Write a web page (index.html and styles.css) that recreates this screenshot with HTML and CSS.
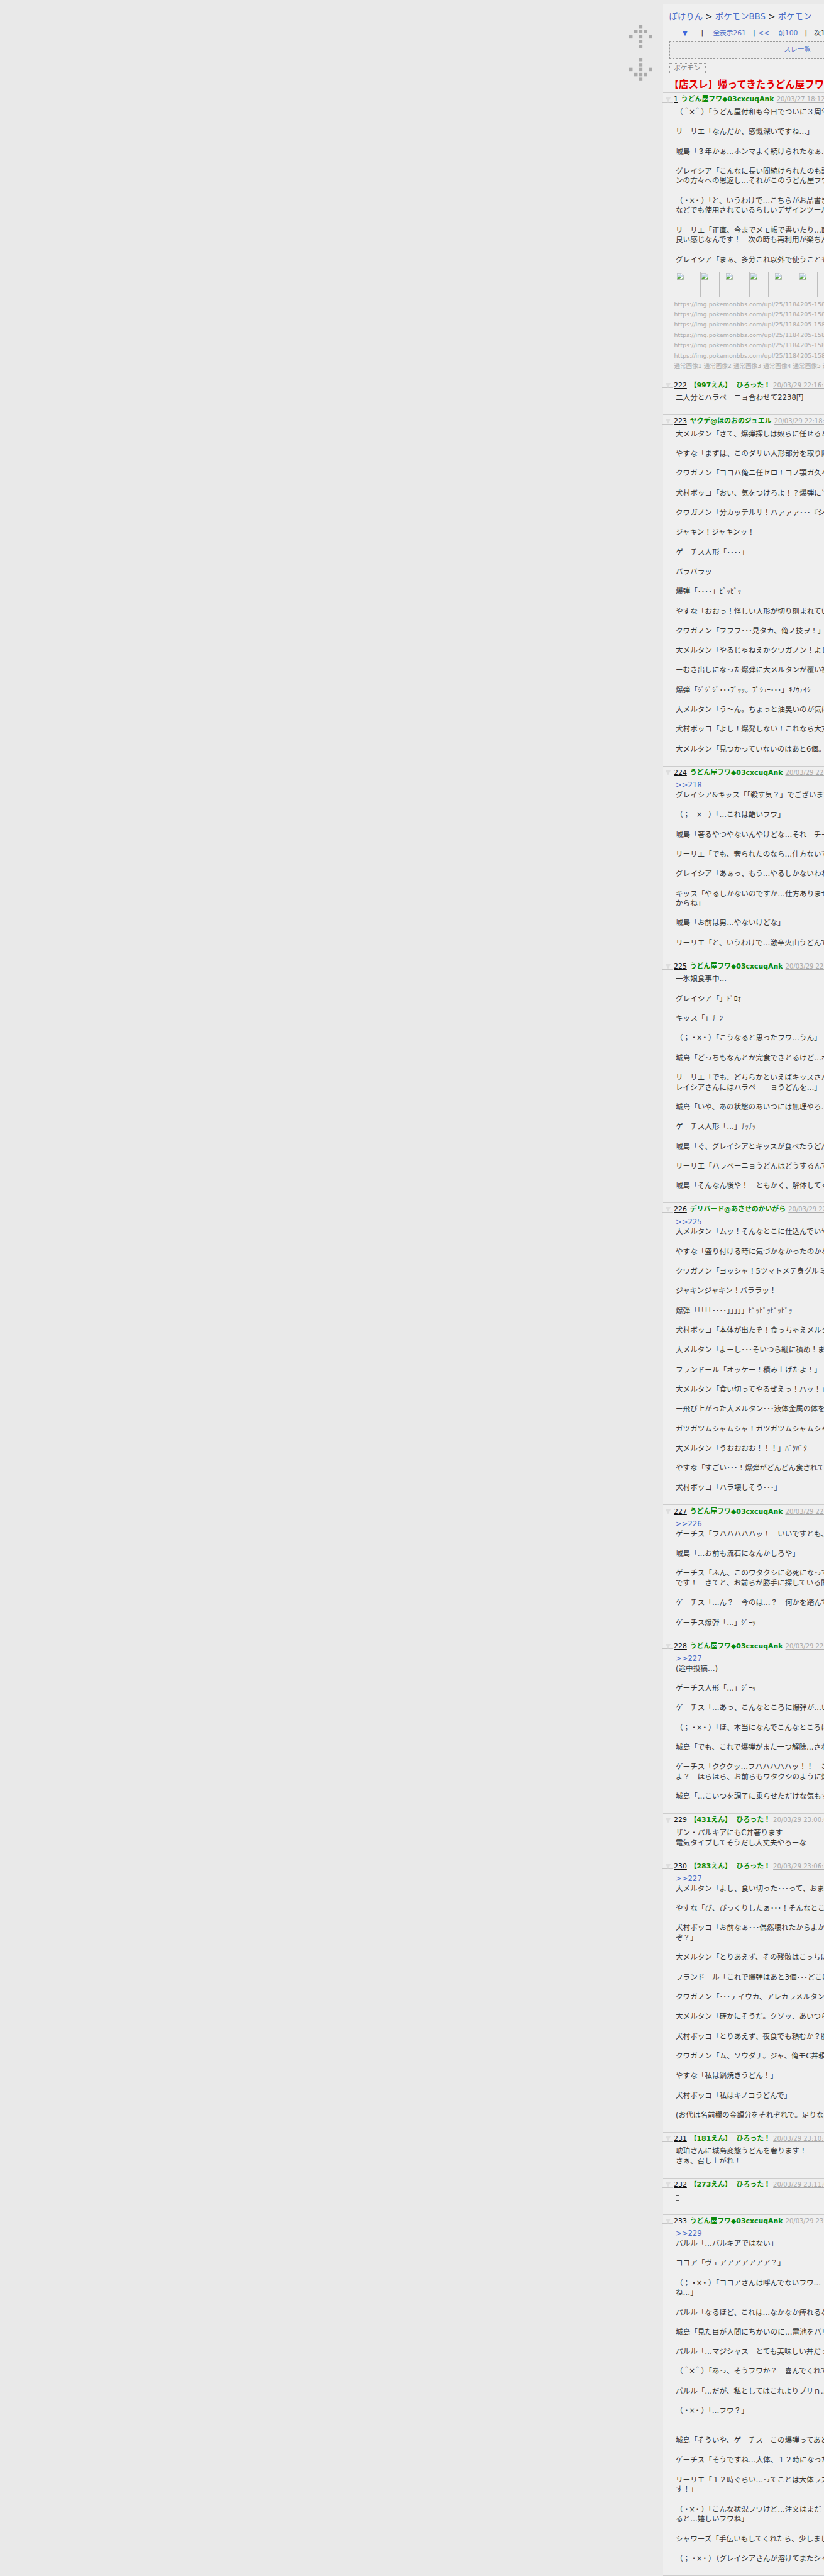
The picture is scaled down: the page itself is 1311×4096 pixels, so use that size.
FILE: index.html
```html
<!DOCTYPE html>
<html lang="ja">
<head>
<meta charset="utf-8">
<title>【店スレ】帰ってきたうどん屋フワ</title>
<link rel="stylesheet" href="styles.css">
</head>
<body>
<div class="page">
  <aside class="side">
    <svg class="arrow" viewBox="0 0 54 54" aria-label="上へ"><g fill="#aaaaaa"><rect x="23" y="0" width="8" height="8"/><rect x="11.7" y="11" width="8" height="8"/><rect x="23" y="11" width="8" height="8"/><rect x="34" y="11" width="8" height="8"/><rect x="0" y="23" width="8" height="8"/><rect x="23" y="23" width="8" height="8"/><rect x="46" y="23" width="8" height="8"/><rect x="23" y="34" width="8" height="8"/><rect x="23" y="46" width="8" height="8"/></g></svg>
    <svg class="arrow" viewBox="0 0 54 54" aria-label="下へ"><g fill="#aaaaaa"><rect x="23" y="0" width="8" height="8"/><rect x="23" y="12" width="8" height="8"/><rect x="0" y="23" width="8" height="8"/><rect x="23" y="23" width="8" height="8"/><rect x="46" y="23" width="8" height="8"/><rect x="11.7" y="35" width="8" height="8"/><rect x="23" y="35" width="8" height="8"/><rect x="34" y="35" width="8" height="8"/><rect x="23" y="46" width="8" height="8"/></g></svg>
  </aside>
  <main class="main">
    <div class="top">
      <div class="crumb"><a class="lnk">ぽけりん</a> &gt; <a class="lnk">ポケモンBBS</a> &gt; <a class="lnk">ポケモン</a></div>
      <div class="subnav">
        <a class="lnk sn-down">▼</a><span class="sn-bar1">|</span><a class="lnk sn-all">全表示261</a><span class="sn-bar2">|</span><a class="lnk sn-first">&lt;&lt;</a><a class="lnk sn-prev">前100</a><span class="sn-bar2">|</span><span class="sn-next">次100</span>
      </div>
      <div class="listbox"><a class="lnk">スレ一覧</a></div>
      <div class="tag">ポケモン</div>
      <h1 class="title">【店スレ】帰ってきたうどん屋フワ最終章</h1>
    </div>

    <article class="post">
      <span class="mark"><span class="tri"></span></span>
      <div class="head"><span class="num">1</span><span class="name">うどん屋フワ◆03cxcuqAnk</span><span class="date">20/03/27 18:12:34</span></div>
      <div class="text text-attach">（＾<i class="x">×</i>＾）「うどん屋付和も今日でついに３周年<br><br>リーリエ「なんだか、感慨深いですね…」<br><br>城島「３年かぁ…ホンマよく続けられたなぁ…<br><br>グレイシア「こんなに長い間続けられたのも読者<br>ンの方々への恩返し…それがこのうどん屋フワ<br><br>（・<i class="x">×</i>・）「と、いうわけで…こちらがお品書き<br>などでも使用されているらしいデザインツール<br><br>リーリエ「正直、今までメモ帳で書いたり…面<br>良い感じなんです！　次の時も再利用が楽ちん<br><br>グレイシア「まぁ、多分これ以外で使うことも</div>
      <div class="attach">
        <div class="thumbs">
          <span class="thumb"><svg class="broken" viewBox="0 0 16 16"><path d="M.5.5H10L15.5 6V15.5H.5Z" fill="#fff" stroke="#999"/><path d="M1 1H10V6H15V9L8 10 1 13Z" fill="#c6d8ea"/><path d="M2 3.5H7V5.5H2Z" fill="#fff"/><path d="M1 15V12L6 8 10 11 3 15Z" fill="#5aa83c"/><path d="M12 13L15 10V15H10Z" fill="#5aa83c"/></svg></span>
          <span class="thumb"><svg class="broken" viewBox="0 0 16 16"><path d="M.5.5H10L15.5 6V15.5H.5Z" fill="#fff" stroke="#999"/><path d="M1 1H10V6H15V9L8 10 1 13Z" fill="#c6d8ea"/><path d="M2 3.5H7V5.5H2Z" fill="#fff"/><path d="M1 15V12L6 8 10 11 3 15Z" fill="#5aa83c"/><path d="M12 13L15 10V15H10Z" fill="#5aa83c"/></svg></span>
          <span class="thumb"><svg class="broken" viewBox="0 0 16 16"><path d="M.5.5H10L15.5 6V15.5H.5Z" fill="#fff" stroke="#999"/><path d="M1 1H10V6H15V9L8 10 1 13Z" fill="#c6d8ea"/><path d="M2 3.5H7V5.5H2Z" fill="#fff"/><path d="M1 15V12L6 8 10 11 3 15Z" fill="#5aa83c"/><path d="M12 13L15 10V15H10Z" fill="#5aa83c"/></svg></span>
          <span class="thumb"><svg class="broken" viewBox="0 0 16 16"><path d="M.5.5H10L15.5 6V15.5H.5Z" fill="#fff" stroke="#999"/><path d="M1 1H10V6H15V9L8 10 1 13Z" fill="#c6d8ea"/><path d="M2 3.5H7V5.5H2Z" fill="#fff"/><path d="M1 15V12L6 8 10 11 3 15Z" fill="#5aa83c"/><path d="M12 13L15 10V15H10Z" fill="#5aa83c"/></svg></span>
          <span class="thumb"><svg class="broken" viewBox="0 0 16 16"><path d="M.5.5H10L15.5 6V15.5H.5Z" fill="#fff" stroke="#999"/><path d="M1 1H10V6H15V9L8 10 1 13Z" fill="#c6d8ea"/><path d="M2 3.5H7V5.5H2Z" fill="#fff"/><path d="M1 15V12L6 8 10 11 3 15Z" fill="#5aa83c"/><path d="M12 13L15 10V15H10Z" fill="#5aa83c"/></svg></span>
          <span class="thumb"><svg class="broken" viewBox="0 0 16 16"><path d="M.5.5H10L15.5 6V15.5H.5Z" fill="#fff" stroke="#999"/><path d="M1 1H10V6H15V9L8 10 1 13Z" fill="#c6d8ea"/><path d="M2 3.5H7V5.5H2Z" fill="#fff"/><path d="M1 15V12L6 8 10 11 3 15Z" fill="#5aa83c"/><path d="M12 13L15 10V15H10Z" fill="#5aa83c"/></svg></span>
        </div>
        <div class="url">https://img.pokemonbbs.com/upl/25/1184205-1585</div>
        <div class="url">https://img.pokemonbbs.com/upl/25/1184205-1585</div>
        <div class="url">https://img.pokemonbbs.com/upl/25/1184205-1585</div>
        <div class="url">https://img.pokemonbbs.com/upl/25/1184205-1585</div>
        <div class="url">https://img.pokemonbbs.com/upl/25/1184205-1585</div>
        <div class="url">https://img.pokemonbbs.com/upl/25/1184205-1585</div>
        <div class="url">通常画像1 通常画像2 通常画像3 通常画像4 通常画像5 通常画像6</div>
      </div>
    </article>

    <article class="post">
      <span class="mark"><span class="tri"></span></span>
      <div class="head"><span class="num">222</span><span class="name">【997えん】&nbsp;&nbsp;ひろった！</span><span class="date">20/03/29 22:16:18</span></div>
      <div class="text">二人分とハラペーニョ合わせて2238円</div>
    </article>

    <article class="post">
      <span class="mark"><span class="tri"></span></span>
      <div class="head"><span class="num">223</span><span class="name">ヤクデ@ほのおのジュエル</span><span class="date">20/03/29 22:18:02</span></div>
      <div class="text">大メルタン「さて、爆弾探しは奴らに任せるとして<br><br>やすな「まずは、このダサい人形部分を取り除こう<br><br>クワガノン「ココハ俺ニ任セロ！コノ顎ガ久々ニ<br><br>犬村ボッコ「おい、気をつけろよ！？爆弾に当てる<br><br>クワガノン「分カッテルサ！ハァァァ･･･『シザー<br><br>ジャキン！ジャキンッ！<br><br>ゲーチス人形「････」<br><br>バラバラッ<br><br>爆弾「････」ﾋﾟｯﾋﾟｯ<br><br>やすな「おおっ！怪しい人形が切り刻まれていく<br><br>クワガノン「フフフ･･･見タカ、俺ノ技ヲ！」<br><br>大メルタン「やるじゃねえかクワガノン！よし<br><br>ーむき出しになった爆弾に大メルタンが覆い被さる<br><br>爆弾「ｼﾞｼﾞｼﾞ･･･ﾌﾞｯｯ。ﾌﾟｼｭｰ･･･」ｷﾉｳﾃｲｼ<br><br>大メルタン「う～ん。ちょっと油臭いのが気になる<br><br>犬村ボッコ「よし！爆発しない！これなら大丈夫<br><br>大メルタン「見つかっていないのはあと6個。急ぐ</div>
    </article>

    <article class="post">
      <span class="mark"><span class="tri"></span></span>
      <div class="head"><span class="num">224</span><span class="name">うどん屋フワ◆03cxcuqAnk</span><span class="date">20/03/29 22:24:11</span></div>
      <div class="text"><a class="lnk">&gt;&gt;218</a><br>グレイシア&amp;キッス「「殺す気？」でございます<br><br>（；ー<i class="x">×</i>ー）「…これは酷いフワ」<br><br>城島「奢るやつやないんやけどな…それ　チーズ<br><br>リーリエ「でも、奢られたのなら…仕方ないです<br><br>グレイシア「あぁっ、もう…やるしかないわね<br><br>キッス「やるしかないのですか…仕方ありません<br>からね」<br><br>城島「お前は男…やないけどな」<br><br>リーリエ「と、いうわけで…激辛火山うどんです</div>
    </article>

    <article class="post">
      <span class="mark"><span class="tri"></span></span>
      <div class="head"><span class="num">225</span><span class="name">うどん屋フワ◆03cxcuqAnk</span><span class="date">20/03/29 22:31:40</span></div>
      <div class="text">一氷娘食事中…<br><br>グレイシア「」ﾄﾞﾛｫ<br><br>キッス「」ﾁｰﾝ<br><br>（；・<i class="x">×</i>・）「こうなると思ったフワ…うん」<br><br>城島「どっちもなんとか完食できとるけど…ホンマ<br><br>リーリエ「でも、どちらかといえばキッスさんより<br>レイシアさんにはハラペーニョうどんを…」<br><br>城島「いや、あの状態のあいつには無理やろ…<br><br>ゲーチス人形「…」ﾁｯﾁｯ<br><br>城島「ぐ、グレイシアとキッスが食べたうどんの<br><br>リーリエ「ハラペーニョうどんはどうするんですか<br><br>城島「そんなん後や！　ともかく、解体してくれ</div>
    </article>

    <article class="post">
      <span class="mark"><span class="tri"></span></span>
      <div class="head"><span class="num">226</span><span class="name">デリバード@あさせのかいがら</span><span class="date">20/03/29 22:40:09</span></div>
      <div class="text"><a class="lnk">&gt;&gt;225</a><br>大メルタン「ムッ！そんなとこに仕込んでいやがっ<br><br>やすな「盛り付ける時に気づかなかったのかな<br><br>クワガノン「ヨッシャ！5ツマトメテ身グルミ剥<br><br>ジャキンジャキン！バララッ！<br><br>爆弾「「「「「････」」」」」ﾋﾟｯﾋﾟｯﾋﾟｯﾋﾟｯ<br><br>犬村ボッコ「本体が出たぞ！食っちゃえメルタン<br><br>大メルタン「よーし･･･そいつら縦に積め！まと<br><br>フランドール「オッケー！積み上げたよ！」<br><br>大メルタン「食い切ってやるぜえっ！ハッ！」<br><br>ー飛び上がった大メルタン･･･液体金属の体を広げ<br><br>ガツガツムシャムシャ！ガツガツムシャムシャ！<br><br>大メルタン「うおおおお！！！」ﾊﾞｸﾊﾞｸ<br><br>やすな「すごい･･･！爆弾がどんどん食されていく<br><br>犬村ボッコ「ハラ壊しそう･･･」</div>
    </article>

    <article class="post">
      <span class="mark"><span class="tri"></span></span>
      <div class="head"><span class="num">227</span><span class="name">うどん屋フワ◆03cxcuqAnk</span><span class="date">20/03/29 22:47:55</span></div>
      <div class="text"><a class="lnk">&gt;&gt;226</a><br>ゲーチス「フハハハハハッ！　いいですとも、ええ<br><br>城島「…お前も流石になんかしろや」<br><br>ゲーチス「ふん、このワタクシに必死になって探せ<br>です！　さてと、お前らが勝手に探している間に<br><br>ゲーチス「…ん？　今のは…？　何かを踏んでしまい<br><br>ゲーチス爆弾「…」ｼﾞｰｯ</div>
    </article>

    <article class="post">
      <span class="mark"><span class="tri"></span></span>
      <div class="head"><span class="num">228</span><span class="name">うどん屋フワ◆03cxcuqAnk</span><span class="date">20/03/29 22:52:17</span></div>
      <div class="text"><a class="lnk">&gt;&gt;227</a><br>(途中投稿…)<br><br>ゲーチス人形「…」ｼﾞｰｯ<br><br>ゲーチス「…あっ、こんなところに爆弾が…いやあ<br><br>（；・<i class="x">×</i>・）「ほ、本当になんでこんなところに<br><br>城島「でも、これで爆弾がまた一つ解除…されたな<br><br>ゲーチス「クククッ…フハハハハハッ！！　これで<br>よ？　ほらほら、お前らもワタクシのように爆弾を<br><br>城島「…こいつを調子に乗らせただけな気もする</div>
    </article>

    <article class="post">
      <span class="mark"><span class="tri"></span></span>
      <div class="head"><span class="num">229</span><span class="name">【431えん】&nbsp;&nbsp;ひろった！</span><span class="date">20/03/29 23:00:06</span></div>
      <div class="text">ザン・パルキアにもC丼奢ります<br>電気タイプしてそうだし大丈夫やろーな</div>
    </article>

    <article class="post">
      <span class="mark"><span class="tri"></span></span>
      <div class="head"><span class="num">230</span><span class="name">【283えん】&nbsp;&nbsp;ひろった！</span><span class="date">20/03/29 23:06:32</span></div>
      <div class="text"><a class="lnk">&gt;&gt;227</a><br>大メルタン「よし、食い切った･･･って、おまえ<br><br>やすな「び、びっくりしたぁ･･･！そんなところに<br><br>犬村ボッコ「お前なぁ･･･偶然壊れたからよかった<br>ぞ？」<br><br>大メルタン「とりあえず、その残骸はこっちに<br><br>フランドール「これで爆弾はあと3個･･･どこに<br><br>クワガノン「･･･テイウカ、アレカラメルタンハ<br><br>大メルタン「確かにそうだ。クソッ、あいつら<br><br>犬村ボッコ「とりあえず、夜食でも頼むか？腹が<br><br>クワガノン「ム、ソウダナ。ジャ、俺モC丼頼ム<br><br>やすな「私は鍋焼きうどん！」<br><br>犬村ボッコ「私はキノコうどんで」<br><br>(お代は名前欄の金額分をそれぞれで。足りない分</div>
    </article>

    <article class="post">
      <span class="mark"><span class="tri"></span></span>
      <div class="head"><span class="num">231</span><span class="name">【181えん】&nbsp;&nbsp;ひろった！</span><span class="date">20/03/29 23:10:12</span></div>
      <div class="text">琥珀さんに城島変態うどんを奢ります！<br>さぁ、召し上がれ！</div>
    </article>

    <article class="post">
      <span class="mark"><span class="tri"></span></span>
      <div class="head"><span class="num">232</span><span class="name">【273えん】&nbsp;&nbsp;ひろった！</span><span class="date">20/03/29 23:11:04</span></div>
      <div class="text"><span class="tofu"></span></div>
    </article>

    <article class="post">
      <span class="mark"><span class="tri"></span></span>
      <div class="head"><span class="num">233</span><span class="name">うどん屋フワ◆03cxcuqAnk</span><span class="date">20/03/29 23:18:27</span></div>
      <div class="text"><a class="lnk">&gt;&gt;229</a><br>パルル「…パルキアではない」<br><br>ココア「ヴェアアアアアアア？」<br><br>（；・<i class="x">×</i>・）「ココアさんは呼んでないフワ…<br>ね…」<br><br>パルル「なるほど、これは…なかなか痺れるな<br><br>城島「見た目が人間にちかいのに…電池をバリバリ<br><br>パルル「…マジシャス　とても美味しい丼だった<br><br>（＾<i class="x">×</i>＾）「あっ、そうフワか？　喜んでくれて<br><br>パルル「…だが、私としてはこれよりプリｎ…<br><br>（・<i class="x">×</i>・）「…フワ？」<br><br><br>城島「そういや、ゲーチス　この爆弾ってあと<br><br>ゲーチス「そうですね…大体、１２時になったら<br><br>リーリエ「１２時ぐらい…ってことは大体ラスト<br>す！」<br><br>（・<i class="x">×</i>・）「こんな状況フワけど…注文はまだ<br>ると…嬉しいフワね」<br><br>シャワーズ「手伝いもしてくれたら、少しまし<br><br>（；・<i class="x">×</i>・）（グレイシアさんが溶けてまたシャワ</div>
    </article>

    <article class="post"></article>
  </main>
</div>
</body>
</html>
```
FILE: styles.css
```css
html, body {
  margin: 0;
  padding: 0;
  background: #e9e9e9;
}
body {
  width: 1311px;
  height: 4096px;
  overflow: hidden;
  font-family: "DejaVu Sans", "Noto Sans CJK JP", sans-serif;
  color: #333333;
}
.page {
  display: flex;
  width: 1311px;
  height: 4096px;
  overflow: hidden;
}
.side {
  flex: none;
  width: 1054.8px;
  box-sizing: border-box;
  padding: 40px 0 0 1001.2px;
  display: flex;
  flex-direction: column;
  gap: 15px;
}
.arrow {
  display: block;
  width: 36.83px;
  height: 36.83px;
}
.main {
  flex: none;
  width: 428px;
  margin-top: 5.5px;
  background: #efefef;
}
.lnk {
  color: #4a6cc8;
  text-decoration: none;
}
.top {
  padding: 12.6px 0 1.4px 9.75px;
}
.crumb {
  font-size: 13.4px;
  line-height: 17px;
  color: #222222;
  white-space: nowrap;
}
.subnav {
  display: flex;
  margin-top: 11.25px;
  font-size: 10.7px;
  line-height: 13.64px;
  color: #222222;
  white-space: nowrap;
}
.sn-down { margin-left: 21.1px; color: #3f68dc; }
.sn-bar1 { margin-left: 21.6px; }
.sn-all { margin-left: 15.3px; }
.sn-bar2 { margin-left: 11.2px; }
.sn-first { margin-left: 4.3px; }
.sn-prev { margin-left: 14.3px; }
.sn-next { margin-left: 11.2px; }
.listbox {
  box-sizing: border-box;
  width: 408px;
  height: 28.6px;
  margin-top: 5.5px;
  border: 1px dashed #999999;
  background: #ebebeb;
  font-size: 10.7px;
  line-height: 26.6px;
  text-align: center;
}
.tag {
  box-sizing: border-box;
  width: 58.6px;
  height: 18.4px;
  margin-top: 5.5px;
  padding-left: 6.5px;
  border: 1px dotted #999999;
  font-size: 10.64px;
  line-height: 16.4px;
  color: #808080;
  white-space: nowrap;
}
.title {
  margin: 7.5px 0 0;
  font-size: 15.5px;
  line-height: 20.5px;
  font-weight: bold;
  color: #e60000;
  white-space: nowrap;
}
.post {
  position: relative;
  border-top: 1px solid #cccccc;
}
.mark {
  position: absolute;
  left: -0.7px;
  top: 0;
  width: 17px;
  height: 13.7px;
  border-bottom: 1px solid #c4c4c4;
}
.tri {
  display: block;
  width: 0;
  height: 0;
  margin: 6.2px 0 0 4.8px;
  border-left: 4.6px solid transparent;
  border-right: 4.6px solid transparent;
  border-top: 8.2px solid #dedede;
}
.head {
  box-sizing: border-box;
  display: flex;
  align-items: center;
  height: 14.7px;
  padding: 5.1px 0 0 17.25px;
  font-size: 10.9px;
  line-height: 13.6px;
  white-space: nowrap;
}
.num {
  color: #111111;
  text-decoration: underline;
}
.name {
  margin-left: 4.8px;
  color: #0a8a0a;
  font-weight: bold;
}
.date {
  margin-left: 4.1px;
  font-size: 10px;
  color: #aaaaaa;
  text-decoration: underline;
}
.text {
  padding: 7.85px 0 18.4px 20.2px;
  font-size: 11.6px;
  line-height: 15.65px;
  white-space: nowrap;
}
.text-attach {
  padding-bottom: 0;
}
.x {
  display: inline-block;
  width: 0.49em;
  font-style: normal;
  text-align: center;
  text-indent: -0.17em;
}
.tofu {
  display: inline-block;
  box-sizing: border-box;
  width: 6.2px;
  height: 9.6px;
  border: 1px solid #555555;
  vertical-align: -1.5px;
}
.attach {
  padding: 10.6px 0 11.3px 17.6px;
}
.thumbs {
  display: flex;
  gap: 7.5px;
  margin: 0 0 3.1px 2.6px;
}
.thumb {
  box-sizing: border-box;
  display: block;
  width: 31.4px;
  height: 40.6px;
  padding: 1.4px;
  border: 1px solid #bdbdbd;
}
.broken {
  display: block;
  width: 10.9px;
  height: 10.9px;
}
.url {
  font-size: 9.55px;
  line-height: 16.37px;
  color: #aaaaaa;
  white-space: nowrap;
}
```
